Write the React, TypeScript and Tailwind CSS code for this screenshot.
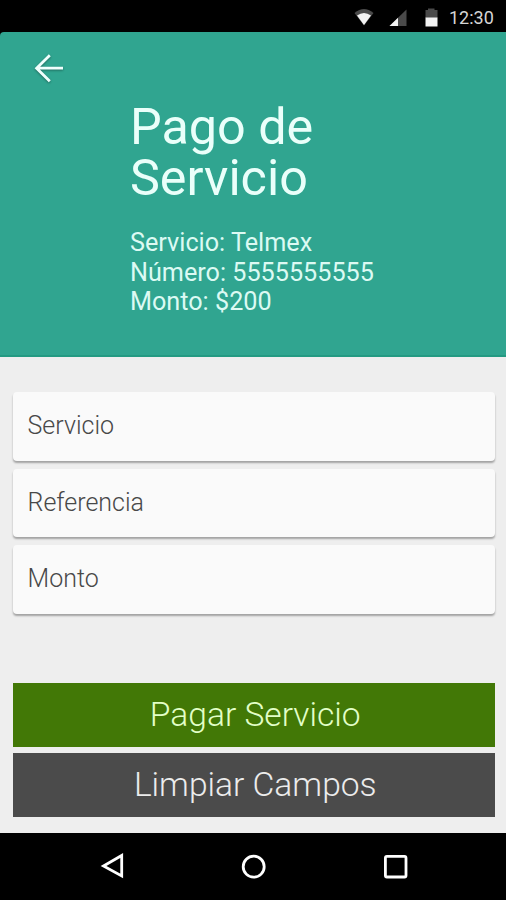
import { AllHTMLAttributes } from 'react';
import { clsx } from 'clsx';

const fields = ['Servicio', 'Referencia', 'Monto'];

function StatusBar() {
  return (
    <div className="h-8 flex items-center justify-end bg-black text-[#d5d5d5]">
      <svg width="90" height="32" viewBox="0 0 90 32" className="mr-2">
        {/* wifi */}
        <path d="M3.5 13 Q13 5 22.5 13 L13 25.5 Z" fill="#4a4a4a" />
        <path d="M6 15.5 Q13 10.5 20 15.5 L13 25 Z" fill="#f2f2f2" />
        {/* signal */}
        <path d="M55.5 9.5 V26 H38.5 Z" fill="#4a4a4a" />
        <path d="M47 17.8 V26 H38.5 Z" fill="#f2f2f2" />
        {/* battery */}
        <path d="M77 8.5 H83.5 V10 H86.5 V18 H74.5 V10 H77 Z" fill="#4a4a4a" />
        <path d="M74.5 17.5 H86.5 V26.5 H74.5 Z" fill="#f2f2f2" />
      </svg>
      <span className="w-[46px] mr-[11px] pt-1 text-[18px] leading-none whitespace-nowrap">12:30</span>
    </div>
  );
}

function Header() {
  return (
    <header className="h-[325px] rounded-tl-sm bg-[#30a590] border-b-2 border-[#239a82] text-[#eafffa]">
      <button className="flex items-start pl-[34px] pt-[22px] h-[70px]">
        <svg
          width="30"
          height="30"
          viewBox="0 0 30 30"
          fill="none"
          stroke="#f0fffd"
          strokeWidth="2.8"
          className="drop-shadow-[0_1px_1px_rgba(0,0,0,0.35)]">
          <path d="M29 14.2 H3 M15.8 1.2 L2.6 14.2 L15.8 27.2" />
        </svg>
      </button>
      <div className="pl-[130px]">
        <h1 className="text-[50.3px] leading-[50.6px]">
          Pago de
          <br />
          Servicio
        </h1>
        <div className="mt-[25px] text-[25.2px] leading-[29.5px] text-[#dcfaf3]">
          <p>Servicio: Telmex</p>
          <p>Número: 5555555555</p>
          <p>Monto: $200</p>
        </div>
      </div>
    </header>
  );
}

function ActionButton({ className, children }: AllHTMLAttributes<HTMLButtonElement>) {
  return (
    <button className={clsx('block w-full h-16 pl-[3px] text-[33.6px] leading-[64px] font-light', className)}>
      <span className="block h-16">{children}</span>
    </button>
  );
}

function NavBar() {
  return (
    <nav className="h-[67px] bg-black flex">
      <svg width="506" height="67" viewBox="0 0 506 67" fill="none" stroke="#fff" strokeWidth="2.8">
        <path d="M121.7 22.5 V43 L103.5 33 Z" />
        <circle cx="253.7" cy="33.7" r="10.5" />
        <rect x="385.4" y="23.4" width="20.6" height="20.6" rx="1.5" />
      </svg>
    </nav>
  );
}

export default function App() {
  return (
    <div className="w-[506px] h-[900px] flex flex-col overflow-hidden bg-black font-['Roboto',sans-serif]">
      <StatusBar />
      <Header />
      <main className="h-[476px] pl-[12.5px] pr-[11px] pt-[35px] bg-[#eeeeee]">
        <div className="flex flex-col gap-2">
          {fields.map((field) => (
            <input
              key={field}
              placeholder={field}
              className="block w-full h-[68.5px] px-[15px] pb-px rounded bg-[#fafafa] text-[25px] font-light placeholder:text-[#484848] shadow-[0_2px_2px_rgba(0,0,0,0.32)]"
            />
          ))}
        </div>
        <div className="mt-[69px] flex flex-col gap-1.5">
          <ActionButton className="bg-[#427806] text-[#e2ffc8]">Pagar Servicio</ActionButton>
          <ActionButton className="bg-[#4b4b4b] text-[#ececec]">Limpiar Campos</ActionButton>
        </div>
      </main>
      <NavBar />
    </div>
  );
}
